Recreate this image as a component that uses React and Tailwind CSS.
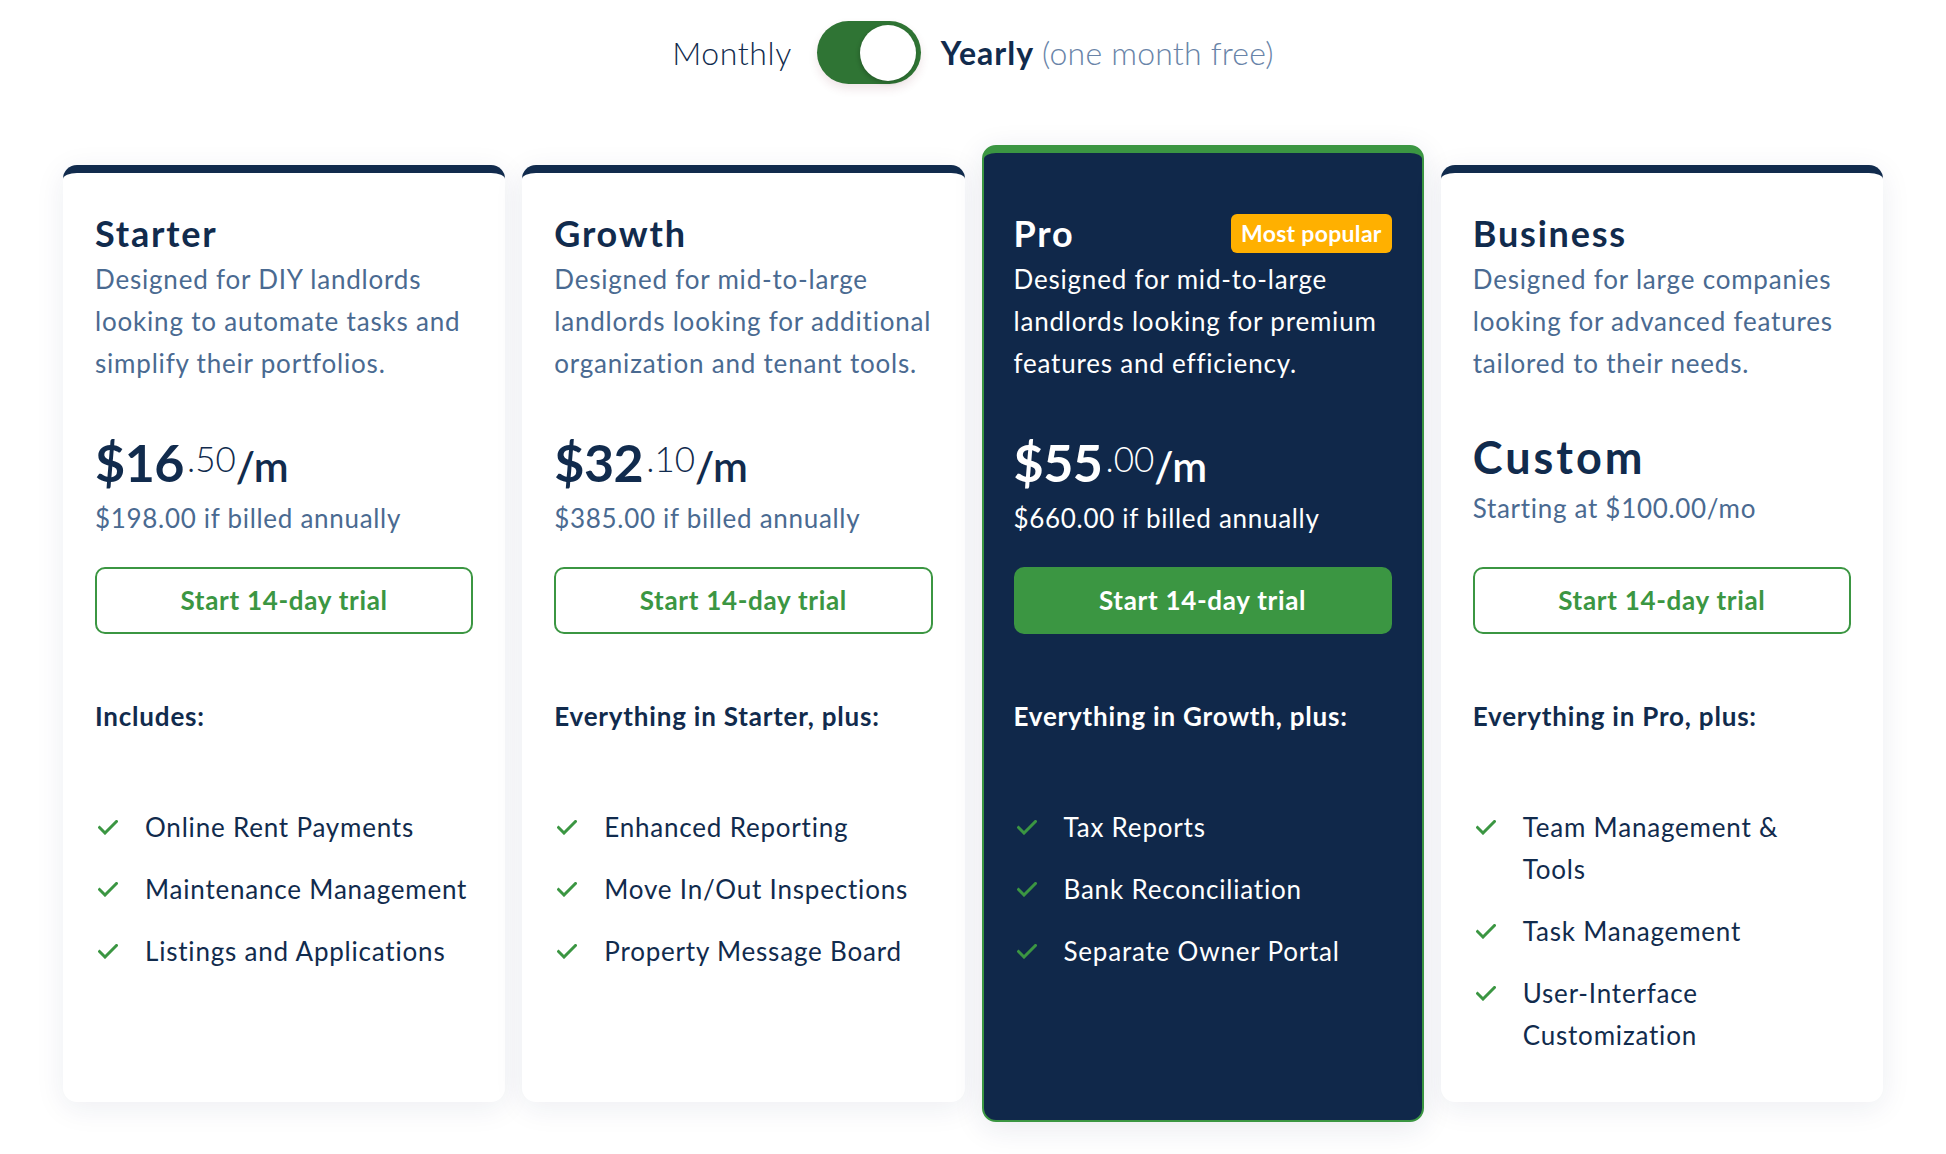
import React from "react";

const NAVY = "text-[#112b4d]";

function Check() {
  return (
    <svg width="20" height="15" viewBox="0 0 20 15" fill="none" className="ml-[3px]">
      <path d="M1.5 7.5 L7 13 L18.5 1.5" stroke="#3b9642" strokeWidth="3" strokeLinecap="square" />
    </svg>
  );
}

const plans = [
  {
    name: "Starter",
    desc: ["Designed for DIY landlords", "looking to automate tasks and", "simplify their portfolios."],
    whole: "$16",
    cents: ".50",
    annual: "$198.00 if billed annually",
    heading: "Includes:",
    features: [["Online Rent Payments"], ["Maintenance Management"], ["Listings and Applications"]],
  },
  {
    name: "Growth",
    desc: ["Designed for mid-to-large", "landlords looking for additional", "organization and tenant tools."],
    whole: "$32",
    cents: ".10",
    annual: "$385.00 if billed annually",
    heading: "Everything in Starter, plus:",
    features: [["Enhanced Reporting"], ["Move In/Out Inspections"], ["Property Message Board"]],
  },
  {
    name: "Pro",
    pro: true,
    desc: ["Designed for mid-to-large", "landlords looking for premium", "features and efficiency."],
    whole: "$55",
    cents: ".00",
    annual: "$660.00 if billed annually",
    heading: "Everything in Growth, plus:",
    features: [["Tax Reports"], ["Bank Reconciliation"], ["Separate Owner Portal"]],
  },
  {
    name: "Business",
    custom: true,
    desc: ["Designed for large companies", "looking for advanced features", "tailored to their needs."],
    heading: "Everything in Pro, plus:",
    features: [["Team Management &", "Tools"], ["Task Management"], ["User-Interface", "Customization"]],
  },
];

function Card({ p }) {
  const dark = !!p.pro;
  const titleColor = dark ? "text-white" : NAVY;
  const descColor = dark ? "text-white" : "text-[#4a6a91]";
  return (
    <div
      className={
        dark
          ? "flex flex-col rounded-[14px] border-2 border-t-8 border-[#3b9642] bg-[#10284a] -my-[20px] pt-[59px] pb-[66px] px-[30px] shadow-[0_6px_30px_rgba(30,40,90,0.10)]"
          : "flex flex-col rounded-[14px] border-t-8 border-[#112b4d] bg-white pt-[39px] pb-[46px] px-[32px] shadow-[0_6px_30px_rgba(30,40,90,0.08)]"
      }
    >
      <div className="flex items-center justify-between">
        <div className={"text-[36px] leading-[43px] font-bold tracking-[0.05em] " + titleColor}>{p.name}</div>
        {dark && (
          <div className="h-[39px] px-[10px] rounded-[6px] bg-[#ffb000] text-white text-[23px] font-bold tracking-[0.3px] flex items-center">
            Most popular
          </div>
        )}
      </div>
      <div className={"mt-[3px] text-[26px] leading-[42px] tracking-[0.8px] whitespace-nowrap " + descColor}>
        {p.desc.map((l, i) => (
          <div key={i}>{l}</div>
        ))}
      </div>
      {p.custom ? (
        <div className="h-[183px] pt-[51px]">
          <div className={"text-[45px] leading-none font-bold tracking-[3px] " + NAVY}>Custom</div>
          <div className="mt-[7px] text-[26px] leading-[42px] tracking-[0.7px] text-[#4a6a91]">Starting at $100.00/mo</div>
        </div>
      ) : (
        <div className="h-[183px] pt-[52px]">
          <div className={"flex items-baseline leading-none " + titleColor}>
            <span className="text-[52px] font-bold tracking-[-0.5px]">{p.whole}</span>
            <span className="self-start mt-[5px] ml-[3px] text-[35px] font-light">{p.cents}</span>
            <span className="text-[42px] font-semibold">/m</span>
          </div>
          <div className={"mt-[9px] text-[26px] leading-[42px] tracking-[0.7px] " + descColor}>{p.annual}</div>
        </div>
      )}
      <div
        className={
          dark
            ? "h-[67px] rounded-[10px] bg-[#3b9642] text-white flex items-center justify-center text-[26px] font-bold tracking-[0.7px]"
            : "h-[67px] rounded-[10px] border-2 border-[#3b9642] text-[#3b9642] flex items-center justify-center text-[26px] font-bold tracking-[0.7px]"
        }
      >
        Start 14-day trial
      </div>
      <div className={"mt-[61px] text-[26px] leading-[42px] font-bold tracking-[0.8px] whitespace-nowrap " + titleColor}>{p.heading}</div>
      <div className="mt-[69px] flex flex-col gap-[20px]">
        {p.features.map((f, i) => (
          <div key={i} className="flex items-start">
            <div className="w-[50px] h-[42px] flex items-center shrink-0">
              <Check />
            </div>
            <div className={"text-[26px] leading-[42px] tracking-[0.8px] whitespace-nowrap " + titleColor}>
              {f.map((l, j) => (
                <div key={j}>{l}</div>
              ))}
            </div>
          </div>
        ))}
      </div>
    </div>
  );
}

export default function App() {
  return (
    <div className="min-h-screen bg-white" style={{ fontFamily: "Lato, 'Open Sans', sans-serif" }}>
      <div className="flex items-center justify-center pt-[21px]">
        <span className={"text-[32px] font-light tracking-[0.6px] " + NAVY}>Monthly</span>
        <div className="ml-[25px] w-[104px] h-[63px] rounded-full bg-[#2f7434] flex items-center justify-end pr-[5px] shadow-[0_5px_10px_rgba(120,40,60,0.12)]">
          <div className="w-[56px] h-[56px] rounded-full bg-white shadow-[-1px_2px_4px_rgba(0,0,0,0.2)]"></div>
        </div>
        <span className={"ml-[20px] text-[32px] font-bold tracking-[1px] " + NAVY}>Yearly</span>
        <span className="ml-[8px] text-[32px] font-light tracking-[0.2px] text-[#6984a8]">(one month free)</span>
      </div>
      <div className="mt-[81px] mx-auto w-[1820px] grid grid-cols-4 gap-[17px] items-stretch pb-[60px]">
        {plans.map((p) => (
          <Card key={p.name} p={p} />
        ))}
      </div>
    </div>
  );
}
